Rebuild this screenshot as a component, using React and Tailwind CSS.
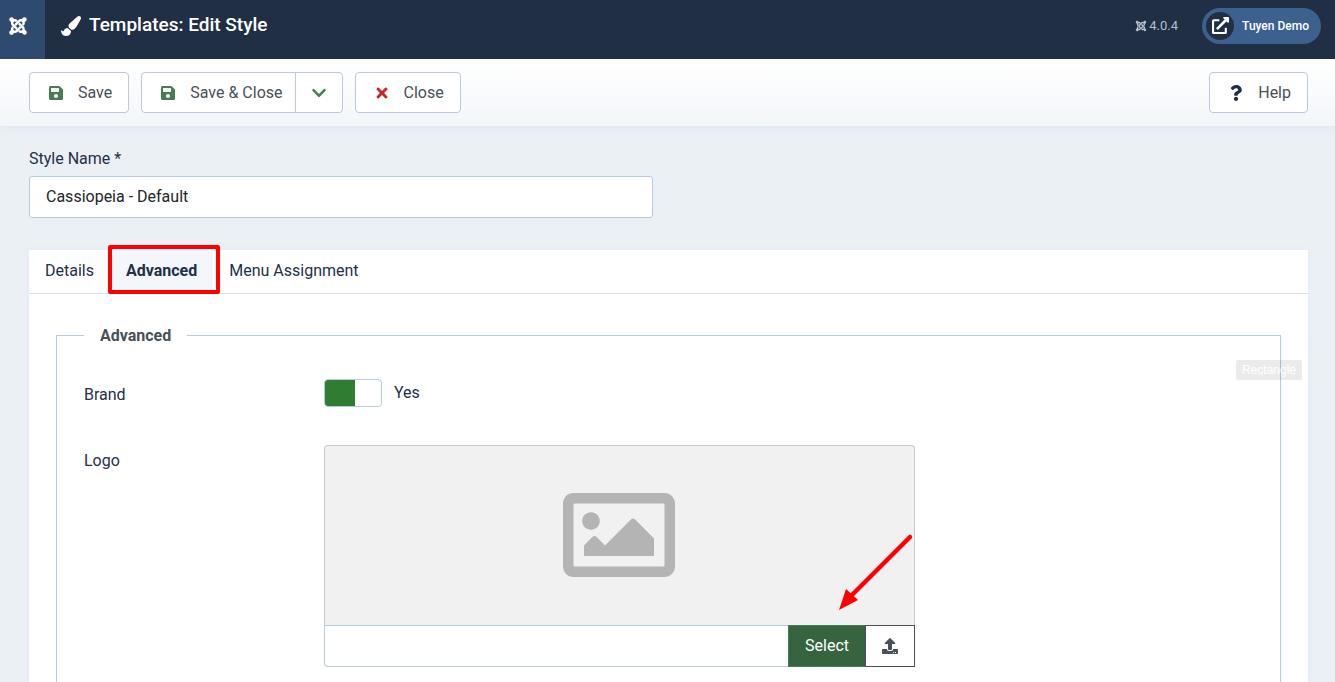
import { useState } from "react";
import {
  FaChevronDown,
  FaExternalLinkAlt,
  FaJoomla,
  FaPaintBrush,
  FaQuestion,
  FaRegImage,
  FaSave,
  FaTimes,
  FaUpload,
} from "react-icons/fa";

const tabs = ["Details", "Advanced", "Menu Assignment"];

const buttonBase =
  "flex h-[41px] cursor-pointer items-center border border-[#bfc8d9] bg-white text-[#495057] hover:bg-gray-50";

function ToolbarButton({ icon, label, className = "rounded px-4" }) {
  return (
    <button type="button" className={`${buttonBase} gap-3 ${className}`}>
      <span className="flex w-5 justify-center">{icon}</span>
      {label}
    </button>
  );
}

function Header() {
  return (
    <header className="relative z-10 flex h-[59px] shrink-0 bg-[#212f45] text-white">
      <a
        href="#home"
        aria-label="Home Dashboard"
        className="flex w-[45px] bg-[#2f4a70] pt-4 pl-2"
      >
        <FaJoomla size={20} />
      </a>
      <div className="flex flex-1 items-center justify-between pr-3.5 pb-2 pl-4">
        <h1 className="flex items-center gap-2 text-[19px] font-medium">
          <FaPaintBrush size={20} />
          Templates: Edit Style
        </h1>
        <div className="flex items-center gap-6">
          <div className="flex items-center gap-0.5 text-[13px] text-[#b3bfd1]">
            <FaJoomla size={12} />
            4.0.4
          </div>
          <a
            href="#user"
            className="flex h-9 items-center gap-2 rounded-full bg-[#3d618f] pr-3 pl-1 text-xs font-medium"
          >
            <span className="flex size-7 items-center justify-center rounded-full bg-[#212f45]">
              <FaExternalLinkAlt size={17} />
            </span>
            Tuyen Demo
          </a>
        </div>
      </div>
    </header>
  );
}

function Toolbar() {
  return (
    <div className="relative flex shrink-0 items-center justify-between bg-linear-to-b from-white to-[#f3f6fa] py-[13px] pr-[27px] pl-[29px] shadow-[0_2px_8px_#dfe6f0]">
      <div className="flex gap-3">
        <ToolbarButton
          icon={<FaSave size={16} className="text-[#457d54]" />}
          label="Save"
        />
        <div className="flex">
          <ToolbarButton
            icon={<FaSave size={16} className="text-[#457d54]" />}
            label="Save & Close"
            className="rounded-l pr-3 pl-4"
          />
          <button
            type="button"
            aria-label="More save options"
            className={`${buttonBase} -ml-px w-12 justify-center rounded-r`}
          >
            <FaChevronDown size={16} className="text-[#457d54]" />
          </button>
        </div>
        <ToolbarButton
          icon={<FaTimes size={16} className="text-[#c52827]" />}
          label="Close"
        />
      </div>
      <ToolbarButton
        icon={<FaQuestion size={16} className="text-[#212f45]" />}
        label="Help"
      />
    </div>
  );
}

function MediaField() {
  return (
    <div className="relative w-full max-w-[591px]">
      <div className="flex h-[180px] items-center justify-center rounded-t border border-b-0 border-[#c6c9cc] bg-[#f1f1f1] pr-0.5 pb-0.5">
        <FaRegImage size={112} className="text-[#b4b4b4]" />
      </div>
      <div className="flex h-[42px]">
        <input
          id="logo"
          type="text"
          className="min-w-0 flex-1 rounded-bl border border-r-0 border-[#b8c9e0] bg-white px-4"
        />
        <button
          type="button"
          className="cursor-pointer border border-[#457d54] bg-[#36643f] px-4 text-white"
        >
          Select
        </button>
        <button
          type="button"
          aria-label="Upload"
          className="-ml-px flex w-[50px] cursor-pointer items-center justify-center border border-[#495057] bg-white text-[#495057]"
        >
          <FaUpload size={16} />
        </button>
      </div>
      {/* arrow pointing at the Select button */}
      <svg
        className="pointer-events-none absolute right-0 bottom-14 h-[78px] w-[78px]"
        viewBox="0 0 78 78"
        fill="none"
      >
        <path d="M73 4 14 63" stroke="#ff0000" strokeWidth="4.5" strokeLinecap="round" />
        <path d="M2 77 9 56 21 67Z" fill="#ff0000" />
      </svg>
    </div>
  );
}

export default function App() {
  const [activeTab, setActiveTab] = useState("Advanced");
  const [brand, setBrand] = useState(true);

  return (
    <div className="flex h-screen flex-col overflow-hidden bg-[#ebf0f5] font-[Roboto,sans-serif] text-base text-[#22304a]">
      <Header />
      <Toolbar />

      <main className="flex flex-1 flex-col pt-[21px] pr-[27px] pl-[29px]">
        <div className="grid grid-cols-2 gap-8">
          <div>
            <label htmlFor="style-name" className="block">
              Style Name *
            </label>
            <input
              id="style-name"
              type="text"
              defaultValue="Cassiopeia - Default"
              className="mt-[5px] h-[42px] w-full rounded-[3px] border border-[#b8c9e0] bg-white px-4 pb-0.5 text-[#22262a]"
            />
          </div>
        </div>

        <div className="mt-8 flex flex-1 flex-col bg-white shadow-[0_0_6px_#dfe8f3]">
          <div role="tablist" className="flex h-11 border-b border-[#d8e0ec]">
            {tabs.map((tab) => (
              <button
                key={tab}
                type="button"
                role="tab"
                aria-selected={activeTab === tab}
                onClick={() => setActiveTab(tab)}
                className={`relative cursor-pointer px-4 pb-0.5 ${
                  activeTab === tab ? "bg-[#f3f6fa] font-bold" : ""
                }`}
              >
                {tab}
                {tab === "Advanced" && (
                  <span className="pointer-events-none absolute -top-[5px] -right-[7px] -bottom-px -left-0.5 rounded-[2px] border-4 border-[#ff0000]" />
                )}
              </button>
            ))}
          </div>

          <div className="relative flex flex-1 flex-col px-[27px] pt-7">
            <fieldset className="flex-1 border border-b-0 border-[#b8c9e0] px-[27px] pt-[31px]">
              <legend className="px-4 pt-0.5 font-bold text-[#495057]">
                Advanced
              </legend>

              <div className="flex flex-col gap-[38px]">
                <div className="flex items-start">
                  <label htmlFor="brand" className="w-60 shrink-0 pt-1">
                    Brand
                  </label>
                  <label className="flex cursor-pointer items-center gap-3">
                    <input
                      id="brand"
                      type="checkbox"
                      role="switch"
                      checked={brand}
                      onChange={(e) => setBrand(e.target.checked)}
                      className="peer sr-only"
                    />
                    <span className="flex h-7 w-[58px] overflow-hidden rounded border border-[#b8c9e0] bg-white peer-focus-visible:ring-2">
                      <span
                        className={`w-[30px] ${brand ? "bg-[#2f7d32]" : "ml-auto bg-gray-400"}`}
                      />
                    </span>
                    <span>{brand ? "Yes" : "No"}</span>
                  </label>
                </div>

                <div className="flex items-start">
                  <label htmlFor="logo" className="w-60 shrink-0 pt-1">
                    Logo
                  </label>
                  <MediaField />
                </div>
              </div>
            </fieldset>

            <div className="absolute top-[66px] right-1.5 rounded-[2px] bg-black/8 px-1.5 font-[Liberation_Sans,sans-serif] text-xs leading-5 text-white">
              Rectangle
            </div>
          </div>
        </div>
      </main>
    </div>
  );
}
